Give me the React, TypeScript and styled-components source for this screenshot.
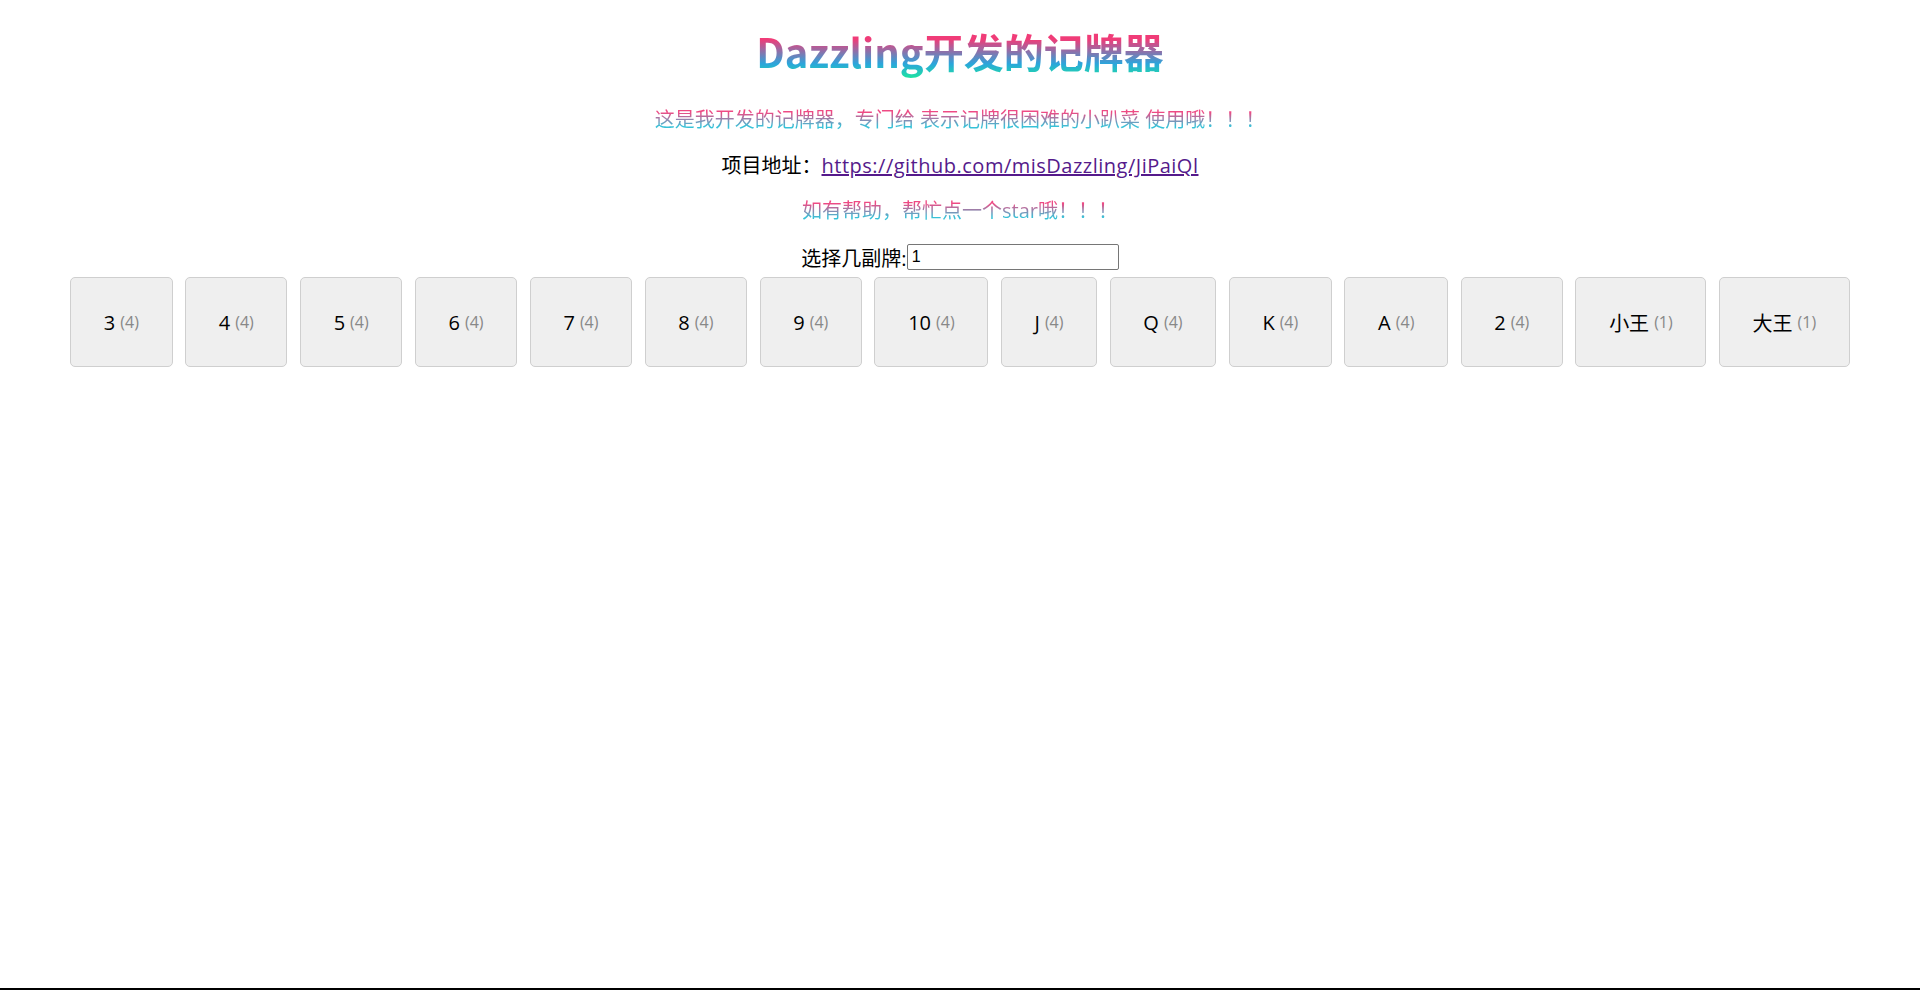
import React, { useState } from "react";
import styled, { createGlobalStyle } from "styled-components";

const GlobalStyle = createGlobalStyle`
  html, body {
    margin: 0;
    padding: 0;
    background: #ffffff;
  }
  body {
    font-family: "Open Sans", "Noto Sans CJK SC", sans-serif;
    color: #000;
  }
  * { box-sizing: border-box; }
`;

const Page = styled.div`
  min-height: 100vh;
  border-bottom: 2px solid #000;
  padding: 0 8px;
  display: flex;
  flex-direction: column;
  align-items: center;
`;

const Title = styled.h1`
  margin: 22px 0 0;
  font-family: "Noto Sans CJK SC", sans-serif;
  font-size: 40px;
  font-weight: 700;
  line-height: 58px;
  background: linear-gradient(180deg, #f03c78 30%, #2ba5dc 72%, #1ee0a4 95%);
  -webkit-background-clip: text;
  background-clip: text;
  color: transparent;
`;

const Line = styled.p<{ $top: number }>`
  margin: ${(p) => p.$top}px 0 0;
  font-size: 20px;
  line-height: 25px;
  text-align: center;
`;

const Gradient = styled.span`
  display: inline-block;
  background: linear-gradient(180deg, #ee4a84 22%, #36c2d8 78%);
  -webkit-background-clip: text;
  background-clip: text;
  color: transparent;
`;

const Link = styled.a`
  color: #551a8b;
  text-decoration: underline;
  letter-spacing: 0.5px;
`;

const PickRow = styled.div`
  margin-top: 20px;
  height: 28px;
  display: flex;
  align-items: center;
  font-size: 20px;
`;

const CountInput = styled.input`
  width: 212px;
  height: 26px;
  border: 1px solid #767676;
  border-radius: 2px;
  padding: 0 4px;
  font-family: "Liberation Sans", Arial, sans-serif;
  font-size: 16px;
  color: #000;
  background: #fff;
  outline: none;
`;

const CardRow = styled.div`
  margin-top: 6px;
  display: flex;
  flex-wrap: wrap;
  justify-content: center;
  gap: 12.5px;
`;

const Card = styled.button`
  height: 90px;
  padding: 0 32.7px;
  border: 1px solid #cfcfcf;
  border-radius: 5px;
  background: #efefef;
  display: flex;
  align-items: center;
  justify-content: center;
  font-family: "Open Sans", "Noto Sans CJK SC", sans-serif;
  font-size: 20px;
  color: #000;
  white-space: nowrap;
  cursor: pointer;
`;

const Count = styled.span`
  margin-left: 5px;
  font-size: 16px;
  color: #888888;
`;

const cards: { name: string; base: number }[] = [
  { name: "3", base: 4 },
  { name: "4", base: 4 },
  { name: "5", base: 4 },
  { name: "6", base: 4 },
  { name: "7", base: 4 },
  { name: "8", base: 4 },
  { name: "9", base: 4 },
  { name: "10", base: 4 },
  { name: "J", base: 4 },
  { name: "Q", base: 4 },
  { name: "K", base: 4 },
  { name: "A", base: 4 },
  { name: "2", base: 4 },
  { name: "小王", base: 1 },
  { name: "大王", base: 1 },
];

export default function App() {
  const [decks, setDecks] = useState("1");
  const n = Math.max(parseInt(decks, 10) || 0, 0);
  return (
    <>
      <GlobalStyle />
      <Page>
        <Title>Dazzling开发的记牌器</Title>
        <Line $top={27}>
          <Gradient>这是我开发的记牌器，专门给 表示记牌很困难的小趴菜 使用哦！！！</Gradient>
        </Line>
        <Line $top={21}>
          项目地址：<Link href="#">https://github.com/misDazzling/JiPaiQl</Link>
        </Line>
        <Line $top={20}>
          <Gradient>如有帮助，帮忙点一个star哦！！！</Gradient>
        </Line>
        <PickRow>
          选择几副牌:
          <CountInput value={decks} onChange={(e) => setDecks(e.target.value)} />
        </PickRow>
        <CardRow>
          {cards.map((c) => (
            <Card key={c.name}>
              {c.name}
              <Count>({c.base * n})</Count>
            </Card>
          ))}
        </CardRow>
      </Page>
    </>
  );
}
